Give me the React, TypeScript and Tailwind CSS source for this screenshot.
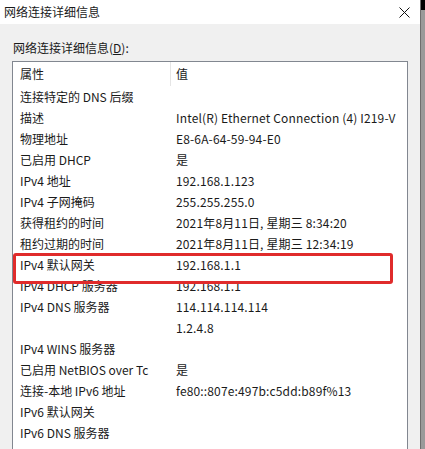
import React from 'react';

const rows: [string, string][] = [
  ['连接特定的 DNS 后缀', ''],
  ['描述', 'Intel(R) Ethernet Connection (4) I219-V'],
  ['物理地址', 'E8-6A-64-59-94-E0'],
  ['已启用 DHCP', '是'],
  ['IPv4 地址', '192.168.1.123'],
  ['IPv4 子网掩码', '255.255.255.0'],
  ['获得租约的时间', '2021年8月11日, 星期三 8:34:20'],
  ['租约过期的时间', '2021年8月11日, 星期三 12:34:19'],
  ['IPv4 默认网关', '192.168.1.1'],
  ['IPv4 DHCP 服务器', '192.168.1.1'],
  ['IPv4 DNS 服务器', '114.114.114.114'],
  ['', '1.2.4.8'],
  ['IPv4 WINS 服务器', ''],
  ['已启用 NetBIOS over Tc', '是'],
  ['连接-本地 IPv6 地址', 'fe80::807e:497b:c5dd:b89f%13'],
  ['IPv6 默认网关', ''],
  ['IPv6 DNS 服务器', ''],
];

export default function App() {
  return (
    <div
      className="flex h-[449px] w-[425px] overflow-hidden text-[12px] text-[#1a1a1a]"
      style={{ fontFamily: '"Noto Sans CJK SC", "Noto Sans", sans-serif' }}
    >
      <div className="flex w-[420px] flex-col bg-[#f0f0f0]">
        <div className="flex h-[24px] items-center justify-between bg-white pl-[4px] pr-[10px]">
          <span>网络连接详细信息</span>
          <svg width="11" height="11" viewBox="0 0 11 11">
            <path d="M0.5 0.5 L10.5 10.5 M10.5 0.5 L0.5 10.5" stroke="#111" strokeWidth="1" />
          </svg>
        </div>
        <div className="flex flex-1 flex-col pl-[12px] pr-[12px] pt-[14px]">
          <div className="mb-[3px] pl-[1px] leading-[20px]">
            网络连接详细信息(<span className="underline">D</span>):
          </div>
          <div className="relative flex-1 border border-b-0 border-[#828790] bg-white">
            <div className="flex h-[24px] items-center">
              <div className="w-[157px] pl-[7px]">属性</div>
              <div className="h-full w-px bg-[#e5e5e5]" />
              <div className="pl-[5px]">值</div>
            </div>
            {rows.map(([k, v], i) => (
              <div key={i} className="flex h-[21px] items-center whitespace-nowrap">
                <div className="w-[158px] pl-[7px]">{k}</div>
                <div className="pl-[5px] tracking-[0.15px]">{v}</div>
              </div>
            ))}
            <div className="absolute left-0 top-[191px] h-[31px] w-[380px] rounded-[3px] border-[3px] border-[#e02b2b]" />
          </div>
        </div>
      </div>
      <div className="flex w-[5px] flex-col border-l border-[#6e6e6e] bg-[#9a9a9a]">
        <div className="h-[10px] bg-black" />
      </div>
    </div>
  );
}
